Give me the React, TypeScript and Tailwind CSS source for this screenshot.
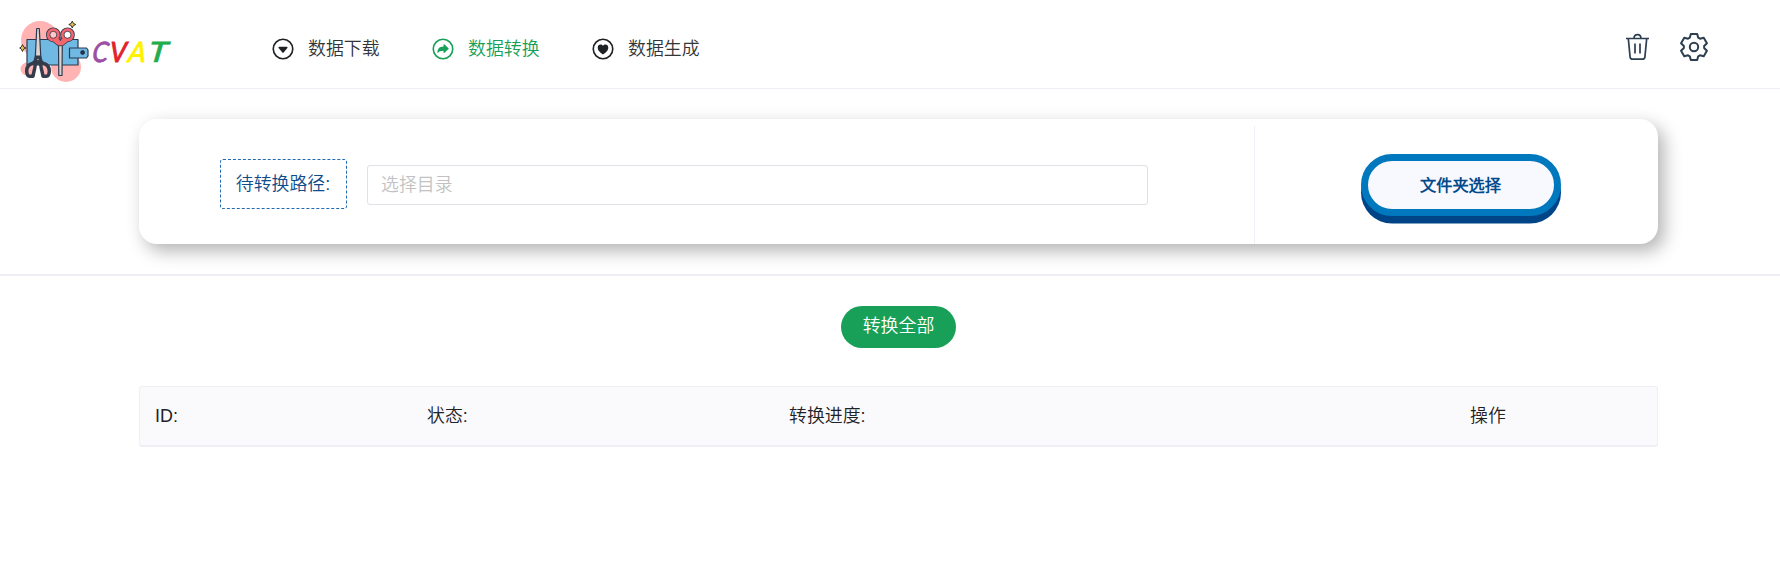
import React from "react";
import {
  IoArrowRedoCircleOutline,
  IoCaretDownCircleOutline,
  IoHeartCircleOutline,
} from "react-icons/io5";

function LogoMark() {
  return (
    <svg className="mt-5 ml-[19px] h-[64px] w-[71px] shrink-0" viewBox="19 20 71 64" fill="none">
      <circle cx="40" cy="40" r="19" fill="#ffb3b3" />
      <circle cx="66" cy="67" r="15" fill="#ffb3b3" />
      <circle cx="27" cy="69" r="6.5" fill="#ffb3b3" />
      <g stroke="#2b3a50" strokeWidth="1.200" strokeLinejoin="round">
        <rect x="27" y="39.500" width="51" height="25.500" fill="#6fb9e3" />
        <path d="M69.500 48h17l1.500 2v6l-1.500 2h-17z" fill="#6fb9e3" />
        <path d="M36.700 28.500h2.600l1.500 29h-5.500z" fill="#ddd3d0" />
        <path d="M58.500 44h3.800l-.3 31.500h-3.200z" fill="#ddd3d0" />
      </g>
      <circle cx="82.600" cy="52.500" r="1.900" fill="#263247" stroke="#263247" />
      <path d="M35 55.500h6l1.500 5 3 3-4 4-3.500-3-3.500 3-4-4 3-3z" fill="#343b4b" />
      <g stroke="#343b4b" strokeWidth="3.500" strokeLinejoin="round">
        <path d="M32.500 63.500c-4 1-6 4-5.800 8 .2 3 1.200 4.700 2.800 4.700h3.500c.6-3 .8-4 1.400-6.500.6-2.500 1.400-4 .4-6.200z" fill="#ffb3b3" />
        <path d="M43.500 63.500c4 1 6 4 5.800 8-.2 3-1.200 4.700-2.800 4.700h-3.500c-.6-3-.8-4-1.400-6.500-.6-2.500-1.400-4-.4-6.200z" fill="#ffb3b3" />
      </g>
      <circle cx="38" cy="59.500" r=".8" fill="#aab0bb" />
      <g stroke="#343b4b" strokeWidth="4.900">
        <circle cx="53.300" cy="34.800" r="4.900" />
        <circle cx="67.500" cy="34.800" r="4.900" />
      </g>
      <path d="M51 40l7 5.700h4.800l7-5.700-4-5-5.400 5-5.500-5z" fill="#f4666d" stroke="#343b4b" strokeWidth=".9" />
      <g stroke="#f4666d" strokeWidth="3.200">
        <circle cx="53.300" cy="34.800" r="4.900" fill="#ffc9cc" />
        <circle cx="67.500" cy="34.800" r="4.900" fill="#fff" />
      </g>
      <g stroke="#343b4b" strokeWidth=".8">
        <circle cx="53.300" cy="34.800" r="3.500" />
        <circle cx="67.500" cy="34.800" r="3.500" />
        <path d="M60.400 37v4" />
      </g>
      <g fill="#e9bd50" stroke="#343434" strokeWidth="1">
        <path d="M72.300 21l1.100 2.400 2.400 1.100-2.400 1.100-1.100 2.400-1.100-2.400-2.400-1.100 2.400-1.100z" />
        <path d="M22.500 44.500l1.100 2.400 2.400 1.100-2.400 1.100-1.100 2.400-1.100-2.400L19.700 48l1.700-1.100z" />
      </g>
    </svg>
  );
}

function Wordmark() {
  return (
    <div className="mt-[36px] ml-px flex h-[30px] w-[85px] shrink-0 font-[Lato] text-[28px] leading-[30px] font-normal italic">
      <span className="w-[18px] origin-bottom-left -skew-x-[8deg] scale-x-[0.9] text-[#9b4fa5] [-webkit-text-stroke:0.900px_#9b4fa5]">C</span>
      <span className="w-[18px] origin-bottom-left -skew-x-[4deg] scale-x-[0.95] text-[#e1222b] [-webkit-text-stroke:0.900px_#e1222b]">V</span>
      <span className="w-[20px] origin-bottom-left -skew-x-[8deg] text-[#fff200] [-webkit-text-stroke:0.900px_#fff200]">A</span>
      <span className="w-[22px] origin-bottom-left -skew-x-[6deg] scale-x-[1.25] text-[#22ac4c] [-webkit-text-stroke:0.700px_#22ac4c]">T</span>
    </div>
  );
}

function TrashIcon() {
  return (
    <svg className="h-7 w-6" viewBox="0 0 24 28" fill="none" stroke="#2c3e50" strokeWidth="1.700">
      <path d="M0 5.500h23M8 5.500C8 .400 15 .400 15 5.500" />
      <path d="M2.300 5.500l1.800 18.600q.3 2.100 2.400 2.100h10q2.100 0 2.400-2.100l1.800-18.600M9 10.500v10M14 10.500v10" />
    </svg>
  );
}

const toothAngles = [0, 60, 120, 180, 240, 300];

function gearPath() {
  const profile = [
    [-4.2, -9.3],
    [-3.2, -13.1],
    [3.2, -13.1],
    [4.2, -9.3],
  ];
  const points = toothAngles.flatMap((deg) => {
    const a = (deg * Math.PI) / 180;
    return profile.map(
      ([x, y]) =>
        `${(x * Math.cos(a) - y * Math.sin(a)).toFixed(2)} ${(x * Math.sin(a) + y * Math.cos(a)).toFixed(2)}`,
    );
  });
  return `M${points.join("L")}Z`;
}

function GearIcon() {
  return (
    <svg className="h-[30px] w-[30px]" viewBox="-15 -15 30 30" fill="none" stroke="#2c3e50" strokeWidth="2" strokeLinejoin="round">
      <path d={gearPath()} />
      <circle r="4.200" />
    </svg>
  );
}

const navItems = [
  { label: "数据下载", Icon: IoCaretDownCircleOutline, active: false },
  { label: "数据转换", Icon: IoArrowRedoCircleOutline, active: true },
  { label: "数据生成", Icon: IoHeartCircleOutline, active: false },
];

export default function App() {
  return (
    <div className="h-[570px] w-[1780px] overflow-hidden bg-white font-['Liberation_Sans','Noto_Sans_CJK_SC_DemiLight','Noto_Sans_CJK_SC',sans-serif] text-[17.9px] leading-7 font-[350] text-[#333639]">
      <header className="flex h-[89px] border-b border-[#efeff5]">
        <LogoMark />
        <Wordmark />
        <nav className="mt-[35px] ml-[94px] flex h-7 gap-[52px]">
          {navItems.map(({ label, Icon, active }) => (
            <a
              key={label}
              className={
                active
                  ? "flex w-[108px] items-center gap-3 whitespace-nowrap text-[#18a058]"
                  : "flex w-[108px] items-center gap-3 whitespace-nowrap text-[#333639]"
              }
            >
              <Icon className={active ? "size-[26px] shrink-0" : "size-[26px] shrink-0 text-[#1f2225]"} />
              {label}
            </a>
          ))}
        </nav>
        <div className="mt-[32px] mr-[71px] ml-auto flex h-[30px] items-center gap-[29px]">
          <TrashIcon />
          <GearIcon />
        </div>
      </header>

      <section className="flex h-[187px] border-b-2 border-[#efeff5] pt-[30px] pl-[139px]">
        <div className="flex h-[125px] w-[1519px] rounded-[18px] bg-white shadow-[6px_7px_18px_rgba(0,0,0,0.3)]">
          <div className="flex w-[1115px] pl-[81px]">
            <div className="mt-10 flex h-[50px] w-[127px] items-center justify-center rounded-[3px] border border-dashed border-[#206ab5] pr-px text-[#0f4c8a]">
              待转换路径:
            </div>
            <input
              className="mt-[46px] ml-5 h-10 w-[781px] rounded-[3px] border border-[#e0e0e6] px-[13px] outline-none placeholder:text-[#c2c2c2]"
              placeholder="选择目录"
            />
          </div>
          <div className="mt-[7px] flex flex-1 justify-center border-l border-[#efeff5]">
            <button className="mt-7 ml-[9px] h-[62px] w-[200px] rounded-[31px] border-[7px] border-[#0078be] bg-[#f8f8ff] pr-px pb-px text-[16.200px] font-bold text-[#004a8c] shadow-[0_7.500px_0_#004488]">
              文件夹选择
            </button>
          </div>
        </div>
      </section>

      <main className="flex flex-col pt-[30px] pl-[139px]">
        <button className="ml-[702px] h-[42px] w-[115px] rounded-full bg-[#18a058] pb-[2px] font-normal text-white">
          转换全部
        </button>
        <div className="mt-[38px] grid h-[61px] w-[1519px] grid-cols-[272px_362px_681px_1fr] items-center rounded-[3px] border border-b-2 border-[#efeff5] bg-[#fafafc] pl-[15px] text-[#1f2225]">
          <div>ID:</div>
          <div>状态:</div>
          <div>转换进度:</div>
          <div>操作</div>
        </div>
      </main>
    </div>
  );
}
